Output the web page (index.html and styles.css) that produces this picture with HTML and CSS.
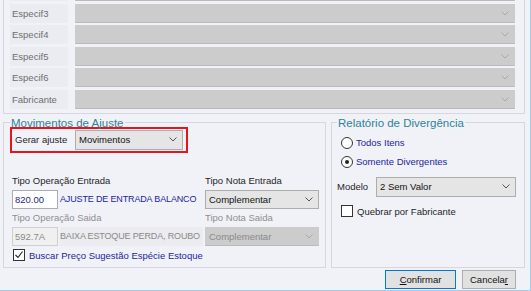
FILE: index.html
```html
<!DOCTYPE html>
<html lang="pt-BR">
<head>
  <meta charset="UTF-8">
  <title>Ajuste de Estoque</title>
  <link rel="stylesheet" href="styles.css">
</head>
<body>
  <div class="window">

    <div class="spec-group">
      <div class="spec-row"><span class="spec-label"></span><div class="combo disabled"><span></span><svg class="chev" width="8" height="5" viewBox="0 0 8 5"><path d="M0.5 0.5 L4 4 L7.5 0.5"/></svg></div></div>
      <div class="spec-row"><span class="spec-label">Especif3</span><div class="combo disabled"><span></span><svg class="chev" width="8" height="5" viewBox="0 0 8 5"><path d="M0.5 0.5 L4 4 L7.5 0.5"/></svg></div></div>
      <div class="spec-row"><span class="spec-label">Especif4</span><div class="combo disabled"><span></span><svg class="chev" width="8" height="5" viewBox="0 0 8 5"><path d="M0.5 0.5 L4 4 L7.5 0.5"/></svg></div></div>
      <div class="spec-row"><span class="spec-label">Especif5</span><div class="combo disabled"><span></span><svg class="chev" width="8" height="5" viewBox="0 0 8 5"><path d="M0.5 0.5 L4 4 L7.5 0.5"/></svg></div></div>
      <div class="spec-row"><span class="spec-label">Especif6</span><div class="combo disabled"><span></span><svg class="chev" width="8" height="5" viewBox="0 0 8 5"><path d="M0.5 0.5 L4 4 L7.5 0.5"/></svg></div></div>
      <div class="spec-row"><span class="spec-label">Fabricante</span><div class="combo disabled"><span></span><svg class="chev" width="8" height="5" viewBox="0 0 8 5"><path d="M0.5 0.5 L4 4 L7.5 0.5"/></svg></div></div>
    </div>

    <div class="bottom">
      <fieldset class="group group-ajuste">
        <legend>Movimentos de Ajuste</legend>

        <div class="highlight">
          <span class="hl-label">Gerar ajuste</span>
          <div class="combo combo-gerar"><span>Movimentos</span><svg class="chev" width="8" height="5" viewBox="0 0 8 5"><path d="M0.5 0.5 L4 4 L7.5 0.5"/></svg></div>
        </div>

        <div class="op-grid">
          <span class="field-label">Tipo Operação Entrada</span>
          <span class="field-label">Tipo Nota Entrada</span>

          <div class="op-row">
            <div class="code">820.00</div>
            <span class="desc">AJUSTE DE ENTRADA BALANCO</span>
          </div>
          <div class="combo"><span>Complementar</span><svg class="chev" width="8" height="5" viewBox="0 0 8 5"><path d="M0.5 0.5 L4 4 L7.5 0.5"/></svg></div>

          <span class="field-label muted">Tipo Operação Saida</span>
          <span class="field-label muted">Tipo Nota Saida</span>

          <div class="op-row">
            <div class="code disabled">592.7A</div>
            <span class="desc disabled">BAIXA ESTOQUE PERDA, ROUBO</span>
          </div>
          <div class="combo disabled"><span>Complementar</span><svg class="chev" width="8" height="5" viewBox="0 0 8 5"><path d="M0.5 0.5 L4 4 L7.5 0.5"/></svg></div>

          <div class="check-row span-all">
            <span class="check checked"><svg width="10" height="10" viewBox="0 0 10 10"><path d="M1.5 5 L4 7.5 L8.5 1.5"/></svg></span>
            <span class="opt-text">Buscar Preço Sugestão Espécie Estoque</span>
          </div>
        </div>
      </fieldset>

      <fieldset class="group group-rel">
        <legend>Relatório de Divergência</legend>

        <div class="radio-row first">
          <span class="radio"></span>
          <span class="opt-text">Todos Itens</span>
        </div>
        <div class="radio-row">
          <span class="radio checked"></span>
          <span class="opt-text">Somente Divergentes</span>
        </div>

        <div class="modelo-row">
          <span class="modelo-label">Modelo</span>
          <div class="combo combo-modelo"><span>2 Sem Valor</span><svg class="chev" width="8" height="5" viewBox="0 0 8 5"><path d="M0.5 0.5 L4 4 L7.5 0.5"/></svg></div>
        </div>

        <div class="check-row quebrar">
          <span class="check"></span>
          <span class="plain-text">Quebrar por Fabricante</span>
        </div>
      </fieldset>
    </div>

    <div class="actions">
      <button class="btn btn-confirm"><u>C</u>onfirmar</button>
      <button class="btn btn-cancel">Cancela<u>r</u></button>
    </div>

  </div>
</body>
</html>
```

FILE: styles.css
```css
body {
  margin: 0;
}
.window {
  width: 531px;
  height: 291px;
  box-sizing: border-box;
  overflow: hidden;
  background: #f1f2f8;
  border-right: 1px solid #a9c7ea;
  border-bottom: 1px solid #a9c7ea;
  font-family: "Liberation Sans", Arial, sans-serif;
  font-size: 9.5px;
  color: #1e1e1e;
}

/* especificações (grupo de cima, cortado) */
.spec-group {
  margin: -18px 5px 0 3px;
  padding: 0 9px 4px 6px;
  border: 1px solid #d6d7dd;
  border-top: 0;
  display: flex;
  flex-direction: column;
  gap: 2.5px;
}
.spec-row {
  display: flex;
  gap: 7px;
  height: 19px;
}
.spec-label {
  width: 58px;
  flex: none;
  box-sizing: border-box;
  padding-left: 2px;
  display: flex;
  align-items: center;
  background: #eaecf2;
  color: #6e6e6e;
}
.spec-row .combo {
  flex: 1;
  height: 19px;
}

/* combos */
.combo {
  display: flex;
  align-items: center;
  justify-content: space-between;
  box-sizing: border-box;
  padding: 0 5px 0 3px;
  background: #e5e5e5;
  border: 1px solid #adadad;
  color: #111;
  white-space: nowrap;
}
.combo.disabled {
  background: #cccccc;
  border-color: #cccccc;
  border-bottom-color: #bababa;
  color: #8a8a8a;
}
.chev {
  fill: none;
  stroke: #555;
  stroke-width: 1;
  flex: none;
}
.combo.disabled .chev {
  stroke: #a9a9a9;
}

/* grupos de baixo */
.bottom {
  display: flex;
  gap: 5px;
  margin: 5px 5px 0 3px;
}
.group {
  margin: 0;
  height: 149px;
  box-sizing: border-box;
  border: 1px solid #d6d7dd;
  min-width: 0;
}
.group legend {
  padding: 0 1px;
  font-size: 11.5px;
  line-height: 8px;
  color: #2f8296;
}
.group-ajuste {
  width: 323px;
  flex: none;
  padding: 0 5px 0 6px;
}
.group-rel {
  width: 194px;
  flex: none;
  padding: 0 8px 0 5px;
}

.highlight {
  width: 178px;
  height: 26px;
  box-sizing: border-box;
  border: 2px solid #e5141d;
  padding: 1px 3px 1px 1px;
  display: flex;
  align-items: center;
}
.hl-label {
  width: 62px;
  padding-left: 2px;
  box-sizing: border-box;
}
.combo-gerar {
  width: 108px;
  height: 20px;
}

.op-grid {
  display: grid;
  grid-template-columns: 191px 114px;
  grid-template-rows: 12px 19px 12px 19px 13px;
  column-gap: 2px;
  row-gap: 3px;
  padding-left: 2px;
  margin-top: 22px;
}
.field-label {
  line-height: 12px;
  white-space: nowrap;
}
.field-label.muted {
  color: #8e8e8e;
}
.op-row {
  display: flex;
  align-items: stretch;
  gap: 2px;
}
.code {
  width: 46px;
  flex: none;
  box-sizing: border-box;
  padding-left: 2px;
  display: flex;
  align-items: center;
  background: #fff;
  border: 1px solid #acadb3;
  color: #1c2a80;
}
.code.disabled {
  background: #f0f0f0;
  border-color: #cfcfcf;
  color: #8a8a8a;
}
.desc {
  flex: 1;
  display: flex;
  align-items: center;
  font-size: 9px;
  letter-spacing: -0.15px;
  white-space: nowrap;
  color: #24249e;
}
.desc.disabled {
  background: #ebebf0;
  color: #8a8a8a;
}

.check-row {
  display: flex;
  align-items: center;
  gap: 4px;
}
.span-all {
  grid-column: 1 / -1;
  padding-left: 1px;
}
.check {
  width: 12px;
  height: 12px;
  box-sizing: border-box;
  border: 1px solid #333;
  background: #fff;
  display: flex;
  align-items: center;
  justify-content: center;
  flex: none;
}
.check svg {
  fill: none;
  stroke: #222;
  stroke-width: 1.1;
}
.opt-text {
  color: #24249e;
  white-space: nowrap;
}
.plain-text {
  white-space: nowrap;
}

/* relatório */
.radio-row {
  display: flex;
  align-items: center;
  gap: 3px;
  height: 14px;
  padding-left: 4px;
  margin-top: 5px;
}
.radio-row.first {
  margin-top: 9px;
}
.radio {
  width: 12px;
  height: 12px;
  box-sizing: border-box;
  border: 1px solid #333;
  border-radius: 50%;
  background: #fff;
  display: flex;
  align-items: center;
  justify-content: center;
  flex: none;
}
.radio.checked::after {
  content: "";
  width: 4px;
  height: 4px;
  border-radius: 50%;
  background: #222;
}
.modelo-row {
  display: flex;
  align-items: center;
  margin-top: 8px;
}
.modelo-label {
  width: 39px;
  flex: none;
}
.combo-modelo {
  width: 140px;
  height: 20px;
}
.quebrar {
  height: 13px;
  padding-left: 4px;
  margin-top: 8px;
}

/* botões */
.actions {
  display: flex;
  justify-content: flex-end;
  gap: 6px;
  padding-right: 14px;
  margin-top: 2px;
}
.btn {
  height: 19px;
  padding: 0;
  font: inherit;
  color: #111;
  background: #e1e1e1;
  border: 1px solid #adadad;
}
.btn-confirm {
  width: 71px;
  border-color: #0078d7;
}
.btn-cancel {
  width: 54px;
}
```
